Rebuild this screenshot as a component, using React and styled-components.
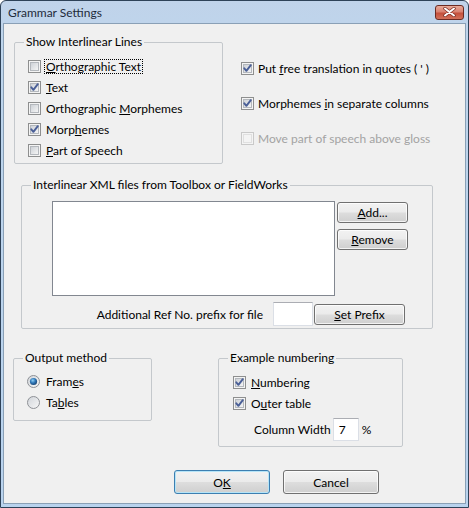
import React, { useId } from "react";
import styled, { createGlobalStyle } from "styled-components";

const GlobalStyle = createGlobalStyle`
  html, body { margin: 0; padding: 0; }
  body {
    font-family: Lato, "Noto Sans", sans-serif;
    font-size: 12px;
    color: #000;
  }
  * { box-sizing: border-box; }
`;

const Window = styled.div`
  width: 469px;
  height: 508px;
  display: flex;
  flex-direction: column;
  border: 1px solid #2e4258;
  border-radius: 6px 6px 0 0;
  padding: 0 2px 3px 2px;
  background: linear-gradient(#c0d3ea, #bed5ec 40px, #b9d3ee);
`;

const TitleBar = styled.div`
  height: 22px;
  display: flex;
  align-items: center;
  justify-content: space-between;
  padding: 0 2px 0 5px;
`;

const Title = styled.span`
  color: #1e2b3b;
  font-size: 12px;
`;

const CloseBox = styled.div`
  width: 29px;
  height: 15px;
  border: 1px solid #6b2a22;
  border-radius: 3px;
  background: linear-gradient(#e9ab9a, #d98170 45%, #c4503c 55%, #d2705a);
  display: flex;
  align-items: center;
  justify-content: center;
`;

const Client = styled.div`
  flex: 1;
  display: flex;
  flex-direction: column;
  background: #f0f0f0;
  border: 1px solid #8aa0b6;
`;

const Row = styled.div`
  display: flex;
  align-items: flex-start;
  margin-top: ${(p) => p.$top}px;
`;

const Group = styled.fieldset`
  margin: 0 0 0 ${(p) => p.$left}px;
  padding: 0;
  min-width: 0;
  width: ${(p) => p.$w}px;
  height: ${(p) => p.$h}px;
  border: 1px solid #c4c8cc;
  border-radius: 2px;
`;

const Legend = styled.legend`
  margin-left: 9px;
  padding: 0 2px;
  line-height: 14px;
  font-size: 12px;
`;

const GroupBody = styled.div`
  padding: ${(p) => p.$pad};
`;

const CheckRow = styled.div`
  height: ${(p) => p.$h || 21}px;
  display: flex;
  align-items: center;
  gap: ${(p) => p.$gap || 5}px;
  color: ${(p) => (p.$disabled ? "#a3a3a3" : "#000")};
  white-space: nowrap;
`;

const Label = styled.span`
  padding: 0 1px;
  margin-left: -1px;
  line-height: 13px;
  outline: ${(p) => (p.$focus ? "1px dotted #000" : "none")};
`;

const RightColumn = styled.div`
  display: flex;
  flex-direction: column;
  gap: 20px;
  margin-left: 18px;
  padding-top: 26px;
`;

const ListArea = styled.div`
  display: flex;
  gap: 2px;
`;

const ListBox = styled.div`
  width: 283px;
  height: 95px;
  background: #fff;
  border: 1px solid #828790;
`;

const ButtonStack = styled.div`
  display: flex;
  flex-direction: column;
  gap: 6px;
  margin-top: 1px;
`;

const Button = styled.button`
  width: ${(p) => p.$w}px;
  height: ${(p) => p.$h || 21}px;
  padding: 0;
  font-family: inherit;
  font-size: 12px;
  color: #000;
  border: 1px solid ${(p) => (p.$default ? "#3c7fb1" : "#707070")};
  border-radius: 3px;
  background: linear-gradient(#f2f2f2 0%, #ebebeb 48%, #dddddd 52%, #cfcfcf 100%);
  box-shadow: inset 0 0 0 1px ${(p) => (p.$default ? "#b6e4f7" : "rgba(255,255,255,0.75)")};
  text-align: center;
  cursor: default;
`;

const PrefixRow = styled.div`
  display: flex;
  align-items: center;
  justify-content: flex-end;
  margin-top: 6px;
  padding-right: 27px;
`;

const PrefixLabel = styled.span`
  margin-right: 10px;
`;

const TextBox = styled.div`
  width: ${(p) => p.$w}px;
  height: ${(p) => p.$h}px;
  margin-right: ${(p) => p.$right || 0}px;
  background: #fff;
  border: 1px solid #dbdfe6;
  border-top-color: #abadb3;
  display: flex;
  align-items: center;
  padding-left: 5px;
`;

const WidthRow = styled.div`
  display: flex;
  align-items: center;
  margin: 4px 0 0 21px;
`;

const WidthLabel = styled.span`
  margin-right: 2px;
`;

const Percent = styled.span`
  margin-left: 3px;
`;

const Footer = styled.div`
  display: flex;
  gap: 13px;
  margin: 23px 0 0 170px;
`;

function CheckBox({ checked, disabled }) {
  const id = useId();
  return (
    <svg width="13" height="13" viewBox="0 0 13 13">
      <defs>
        <linearGradient id={id} x1="0" y1="0" x2="1" y2="1">
          <stop offset="0" stopColor={disabled ? "#f4f4f4" : "#cbcfd5"} />
          <stop offset="1" stopColor={disabled ? "#f4f4f4" : "#f7f7f7"} />
        </linearGradient>
      </defs>
      <rect x="0.5" y="0.5" width="12" height="12" fill="#f4f4f4" stroke={disabled ? "#c9c9c9" : "#8e8f8f"} />
      <rect x="2.5" y="2.5" width="8" height="8" fill={`url(#${id})`} stroke={disabled ? "#e0e0e0" : "#b4b8bd"} />
      {checked && (
        <path d="M3.3 6.3 L5.4 8.8 L9.8 3.2" fill="none" stroke="#4a5f97" strokeWidth="1.9" strokeLinecap="round" strokeLinejoin="round" />
      )}
    </svg>
  );
}

function Radio({ checked }) {
  const id = useId();
  return (
    <svg width="13" height="13" viewBox="0 0 13 13">
      <defs>
        <linearGradient id={`${id}b`} x1="0" y1="0" x2="1" y2="1">
          <stop offset="0" stopColor="#d0d4d9" />
          <stop offset="1" stopColor="#f8f8f8" />
        </linearGradient>
        <radialGradient id={`${id}d`} cx="0.4" cy="0.35" r="0.7">
          <stop offset="0" stopColor="#8fd0f5" />
          <stop offset="0.5" stopColor="#2f77b8" />
          <stop offset="1" stopColor="#17406e" />
        </radialGradient>
      </defs>
      <circle cx="6.5" cy="6.5" r="6" fill={`url(#${id}b)`} stroke="#8e9196" />
      {checked && <circle cx="6.5" cy="6.5" r="3.6" fill={`url(#${id}d)`} />}
    </svg>
  );
}

function Check({ checked, disabled, focus, gap, h, children }) {
  return (
    <CheckRow $disabled={disabled} $gap={gap} $h={h}>
      <CheckBox checked={checked} disabled={disabled} />
      <Label $focus={focus}>{children}</Label>
    </CheckRow>
  );
}

export default function App() {
  return (
    <>
      <GlobalStyle />
      <Window>
        <TitleBar>
          <Title>Grammar Settings</Title>
          <CloseBox>
            <svg width="13" height="10" viewBox="0 0 13 10">
              <path d="M2 1.5 L11 8.5 M11 1.5 L2 8.5" stroke="#7a2c22" strokeWidth="3.4" strokeLinecap="round" />
              <path d="M2 1.5 L11 8.5 M11 1.5 L2 8.5" stroke="#fff" strokeWidth="2" strokeLinecap="round" />
            </svg>
          </CloseBox>
        </TitleBar>
        <Client>
          <Row $top={11}>
            <Group $left={10} $w={209} $h={129}>
              <Legend>Show Interlinear Lines</Legend>
              <GroupBody $pad="7px 0 0 13px">
                <Check focus>
                  <u>O</u>rthographic Text
                </Check>
                <Check checked>
                  <u>T</u>ext
                </Check>
                <Check>
                  Orthographic <u>M</u>orphemes
                </Check>
                <Check checked>
                  Morp<u>h</u>emes
                </Check>
                <Check>
                  <u>P</u>art of Speech
                </Check>
              </GroupBody>
            </Group>
            <RightColumn>
              <Check checked h={15} gap={4}>
                Put <u>f</u>ree translation in quotes ( ' )
              </Check>
              <Check checked h={15} gap={4}>
                Morphemes <u>i</u>n separate columns
              </Check>
              <Check disabled h={15} gap={4}>
                Move part of speech above gloss
              </Check>
            </RightColumn>
          </Row>

          <Row $top={14}>
            <Group $left={17} $w={412} $h={151}>
              <Legend>Interlinear XML files from Toolbox or FieldWorks</Legend>
              <GroupBody $pad="9px 0 0 30px">
                <ListArea>
                  <ListBox />
                  <ButtonStack>
                    <Button $w={71}>
                      <u>A</u>dd...
                    </Button>
                    <Button $w={71}>
                      <u>R</u>emove
                    </Button>
                  </ButtonStack>
                </ListArea>
              </GroupBody>
              <PrefixRow>
                <PrefixLabel>Additional Ref No. prefix for file</PrefixLabel>
                <TextBox $w={40} $h={24} $right={1} />
                <Button $w={91}>
                  <u>S</u>et Prefix
                </Button>
              </PrefixRow>
            </Group>
          </Row>

          <Row $top={22}>
            <Group $left={9} $w={139} $h={70}>
              <Legend>Output method</Legend>
              <GroupBody $pad="6px 0 0 13px">
                <CheckRow $gap={6}>
                  <Radio checked />
                  <span>
                    Fram<u>e</u>s
                  </span>
                </CheckRow>
                <CheckRow $gap={6}>
                  <Radio />
                  <span>
                    Ta<u>b</u>les
                  </span>
                </CheckRow>
              </GroupBody>
            </Group>
            <Group $left={66} $w={185} $h={96}>
              <Legend>Example numbering</Legend>
              <GroupBody $pad="7px 0 0 14px">
                <Check checked>
                  <u>N</u>umbering
                </Check>
                <Check checked>
                  O<u>u</u>ter table
                </Check>
                <WidthRow>
                  <WidthLabel>Column Width</WidthLabel>
                  <TextBox $w={26} $h={23}>7</TextBox>
                  <Percent>%</Percent>
                </WidthRow>
              </GroupBody>
            </Group>
          </Row>

          <Footer>
            <Button $w={96} $h={24} $default>
              O<u>K</u>
            </Button>
            <Button $w={96} $h={24}>
              Cancel
            </Button>
          </Footer>
        </Client>
      </Window>
    </>
  );
}
